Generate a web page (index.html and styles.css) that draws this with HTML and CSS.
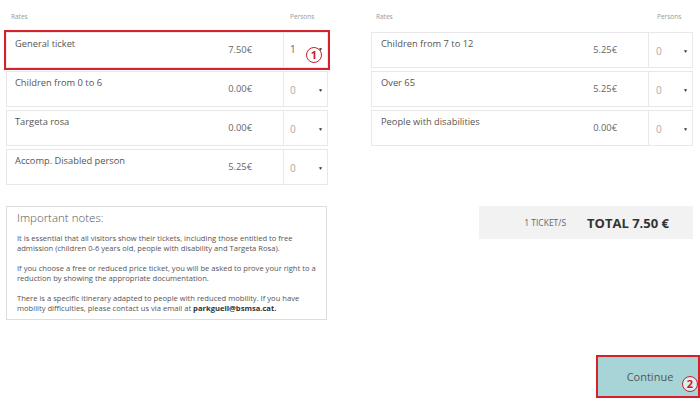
FILE: index.html
```html
<!DOCTYPE html>
<html lang="en">
<head>
    <meta charset="UTF-8">
    <meta name="viewport" content="width=device-width, initial-scale=1.0">
    <title>Park Güell Tickets</title>
    <link rel="stylesheet" href="styles.css">
</head>
<body>
    <div class="page">
        <div class="columns">
            <div class="rates">
                <div class="rates-head">
                    <span class="head-rate">Rates</span>
                    <span class="head-persons">Persons</span>
                </div>
                <div class="rate marked">
                    <div class="rate-name">General ticket</div>
                    <div class="rate-price">7.50€</div>
                    <div class="rate-qty picked"><span>1</span><span class="arrow">▼</span></div>
                    <span class="step step-one">1</span>
                </div>
                <div class="rate">
                    <div class="rate-name">Children from 0 to 6</div>
                    <div class="rate-price">0.00€</div>
                    <div class="rate-qty"><span>0</span><span class="arrow">▼</span></div>
                </div>
                <div class="rate">
                    <div class="rate-name">Targeta rosa</div>
                    <div class="rate-price">0.00€</div>
                    <div class="rate-qty"><span>0</span><span class="arrow">▼</span></div>
                </div>
                <div class="rate">
                    <div class="rate-name">Accomp. Disabled person</div>
                    <div class="rate-price">5.25€</div>
                    <div class="rate-qty"><span>0</span><span class="arrow">▼</span></div>
                </div>
            </div>

            <div class="rates rates-right">
                <div class="rates-head">
                    <span class="head-rate">Rates</span>
                    <span class="head-persons">Persons</span>
                </div>
                <div class="rate">
                    <div class="rate-name">Children from 7 to 12</div>
                    <div class="rate-price">5.25€</div>
                    <div class="rate-qty"><span>0</span><span class="arrow">▼</span></div>
                </div>
                <div class="rate">
                    <div class="rate-name">Over 65</div>
                    <div class="rate-price">5.25€</div>
                    <div class="rate-qty"><span>0</span><span class="arrow">▼</span></div>
                </div>
                <div class="rate">
                    <div class="rate-name">People with disabilities</div>
                    <div class="rate-price">0.00€</div>
                    <div class="rate-qty"><span>0</span><span class="arrow">▼</span></div>
                </div>
            </div>
        </div>

        <div class="columns summary">
            <div class="notes">
                <h3>Important notes:</h3>
                <p>It is essential that all visitors show their tickets, including those entitled to free<br>
                admission (children 0-6 years old, people with disability and Targeta Rosa).</p>
                <p>If you choose a free or reduced price ticket, you will be asked to prove your right to a<br>
                reduction by showing the appropriate documentation.</p>
                <p>There is a specific itinerary adapted to people with reduced mobility. If you have<br>
                mobility difficulties, please contact us via email at <b>parkguell@bsmsa.cat.</b></p>
            </div>
            <div class="total-wrap">
                <div class="total">
                    <span class="total-count">1 TICKET/S</span>
                    <span class="total-sum">TOTAL 7.50 €</span>
                </div>
            </div>
        </div>

        <div class="footer">
            <button class="continue">Continue<span class="step step-two">2</span></button>
        </div>
    </div>
</body>
</html>
```

FILE: styles.css
```css
html, body {
    margin: 0;
    background-color: #fff;
}
body {
    font-family: "Open Sans", Arial, sans-serif;
    color: #555;
}
.page {
    padding: 12px 2px 0 6px;
    height: 399px;
    box-sizing: border-box;
}
.columns {
    display: grid;
    grid-template-columns: 322px 322px;
    column-gap: 43px;
}
.rates-head {
    display: flex;
    height: 20px;
    font-size: 6.5px;
    color: #999;
}
.head-rate {
    flex-grow: 1;
    padding-left: 5px;
}
.head-persons {
    width: 38px;
}
.rates-right .head-persons {
    width: 36px;
}
.rate {
    position: relative;
    display: flex;
    height: 36px;
    box-sizing: border-box;
    border: 1px solid #e8e8e8;
    margin-bottom: 3px;
}
.rate.marked {
    outline: 2px solid #d3222c;
}
.rate-name {
    flex-grow: 1;
    padding: 4px 8px;
    font-size: 9.3px;
    color: #555;
}
.rates-right .rate-name {
    padding-left: 9px;
}
.rate-price {
    padding: 10px 31px 0 0;
    font-size: 9.3px;
    color: #666;
}
.rate-qty {
    width: 44px;
    box-sizing: border-box;
    border-left: 1px solid #e8e8e8;
    display: flex;
    justify-content: space-between;
    align-items: center;
    padding: 1px 4px 0 6px;
    font-size: 10px;
    color: #aaa;
}
.rate-qty.picked {
    color: #666;
    padding-top: 0;
    padding-bottom: 3px;
}
.rates-right .rate-qty {
    padding-left: 7px;
}
.rate-qty .arrow {
    font-size: 5px;
    color: #333;
}
.step {
    position: absolute;
    width: 14px;
    height: 14px;
    border: 1.5px solid #c8202a;
    border-radius: 50%;
    color: #c8202a;
    font-size: 11px;
    font-weight: bold;
    line-height: 14px;
    text-align: center;
    background-color: rgba(255, 255, 255, 0.6);
}
.step-one {
    left: 299px;
    top: 14px;
}
.summary {
    margin-top: 18px;
}
.notes {
    width: 321px;
    box-sizing: border-box;
    border: 1px solid #ddd;
    padding: 3px 10px 6px;
}
.notes h3 {
    margin: 0 0 8px;
    font-size: 11.5px;
    font-weight: 300;
    color: #555;
}
.notes p {
    margin: 0 0 9px;
    font-size: 7.6px;
    line-height: 10.4px;
    color: #555;
}
.notes p:last-child {
    margin-bottom: 0;
}
.notes b {
    color: #333;
}
.total-wrap {
    display: flex;
    justify-content: flex-end;
    align-items: flex-start;
}
.total {
    width: 214px;
    height: 33px;
    box-sizing: border-box;
    background-color: #f2f2f2;
    display: flex;
    justify-content: flex-end;
    align-items: center;
    gap: 21px;
    padding-right: 24px;
}
.total-count {
    font-size: 8.5px;
    color: #666;
}
.total-sum {
    font-size: 13px;
    font-weight: bold;
    color: #333;
}
.footer {
    display: flex;
    justify-content: flex-end;
    margin-top: 37px;
}
.continue {
    position: relative;
    width: 100px;
    height: 39px;
    background-color: #a7d4d7;
    color: #555;
    border: none;
    outline: 2px solid #d3222c;
    font-family: "Open Sans", Arial, sans-serif;
    font-size: 11px;
    padding: 0 0 0 4px;
}
.step-two {
    left: 84px;
    top: 19px;
}
```
